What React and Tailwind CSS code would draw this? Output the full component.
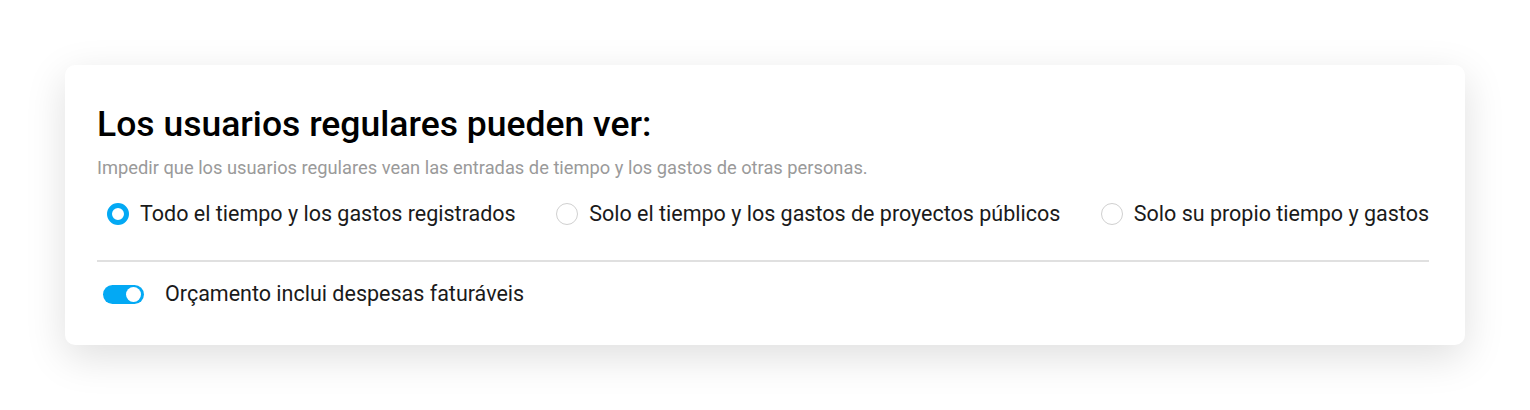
import React from "react";

function Radio({ checked, label }) {
  return (
    <label className="flex items-center gap-[11px] cursor-pointer">
      {checked ? (
        <span className="w-[22px] h-[22px] rounded-full border-[5px] border-[#03a9f4] bg-white box-border" />
      ) : (
        <span className="w-[22px] h-[22px] rounded-full border border-[#d0d0d0] bg-white box-border" />
      )}
      <span className="text-[21.5px] leading-[28px] text-[#1a1a1a] whitespace-nowrap">{label}</span>
    </label>
  );
}

export default function App() {
  return (
    <div
      className="w-[1530px] h-[410px] bg-white pt-[65px] pl-[65px]"
      style={{ fontFamily: "Roboto, 'Noto Sans', sans-serif" }}
    >
      <div className="w-[1400px] h-[280px] bg-white rounded-[10px] shadow-[0_12px_40px_rgba(0,0,0,0.13)] pt-[39px] pl-[32px] pr-[36px]">
        <h1 className="text-[35.5px] leading-[40px] font-medium text-black">
          Los usuarios regulares pueden ver:
        </h1>
        <p className="mt-[12px] text-[18.3px] leading-[24px] text-[#9a9a9a]">
          Impedir que los usuarios regulares vean las entradas de tiempo y los gastos de otras personas.
        </p>
        <div className="mt-[20px] pl-[10px] flex items-center justify-between">
          <Radio checked label="Todo el tiempo y los gastos registrados" />
          <Radio label="Solo el tiempo y los gastos de proyectos públicos" />
          <Radio label="Solo su propio tiempo y gastos" />
        </div>
        <div className="mt-[32px] h-[2px] bg-[#e0e0e0]" />
        <div className="mt-[18px] pl-[6px] flex items-center gap-[21px]">
          <span className="w-[41px] h-[19px] rounded-full bg-[#03a9f4] flex items-center justify-end pr-[3px]">
            <span className="w-[15px] h-[15px] rounded-full bg-white" />
          </span>
          <span className="text-[21.5px] leading-[28px] text-[#1a1a1a]">
            Orçamento inclui despesas faturáveis
          </span>
        </div>
      </div>
    </div>
  );
}
